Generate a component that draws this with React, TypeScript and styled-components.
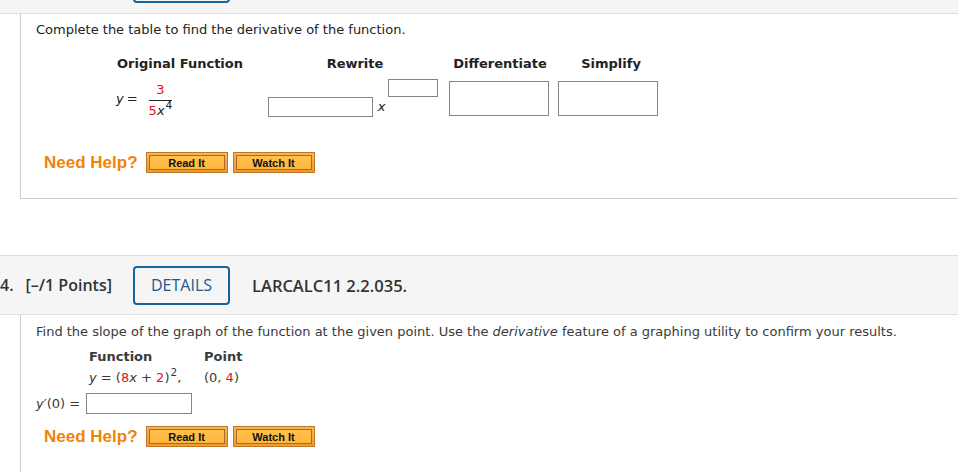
import styled, { createGlobalStyle } from "styled-components";

const GlobalStyle = createGlobalStyle`
  html, body {
    margin: 0;
    padding: 0;
    background: #fff;
  }
  body {
    font-family: "DejaVu Sans", Verdana, sans-serif;
    color: #222;
  }
`;

const Page = styled.div`
  width: 958px;
  height: 472px;
  overflow: hidden;
`;

// tail end of the previous question's header, scrolled mostly out of view
const TopStrip = styled.div`
  height: 13px;
  overflow: hidden;
  display: flex;
  align-items: flex-end;
  padding-left: 133px;
  background: #f5f5f5;
  border-bottom: 1px solid #dedede;
`;

const DetailsStub = styled.div`
  box-sizing: border-box;
  flex-shrink: 0;
  width: 97px;
  height: 39px;
  margin-bottom: 10px;
  border: 2px solid #15649a;
  border-radius: 4px;
`;

const HeaderBand = styled.div`
  display: flex;
  align-items: center;
  height: 58px;
  background: #f5f5f5;
  border-top: 1px solid #dedede;
  border-bottom: 1px solid #dedede;
  font-family: "Open Sans", sans-serif;
  color: #333;
`;

const Points = styled.span`
  font-size: 16px;
  font-weight: 600;
  width: 133px;
  white-space: nowrap;
  display: flex;
  gap: 12px;
`;

const DetailsButton = styled.div`
  box-sizing: border-box;
  width: 97px;
  height: 39px;
  border: 2px solid #15649a;
  border-radius: 4px;
  display: flex;
  align-items: center;
  justify-content: center;
  font-size: 16px;
  color: #22588a;
  margin-right: 22px;
`;

const Source = styled.span`
  font-size: 16.5px;
  font-weight: 600;
`;

const Body = styled.div<{ $height: number; $top: number }>`
  box-sizing: border-box;
  margin-left: 20px;
  height: ${(p) => p.$height}px;
  border-left: 1px solid #cccccc;
  border-bottom: 1px solid #cccccc;
  padding: ${(p) => p.$top}px 0 0 15px;
  font-size: 13px;
`;

const OpenBody = styled(Body)`
  border-bottom: none;
  color: #3a3a3a;
`;

const Gap = styled.div`
  height: 56px;
`;

const Prompt = styled.p`
  margin: 0;
  line-height: 16px;
`;

const Table = styled.div`
  display: grid;
  grid-template-columns: 140px 198px 102px 116px;
  margin: 18px 0 0 74px;
`;

const HeadCell = styled.div<{ $shift?: number }>`
  font-weight: bold;
  text-align: center;
  line-height: 16px;
  height: 22px;
  padding-left: ${(p) => (p.$shift ?? 0) * 2}px;
`;

const Cell = styled.div<{ $pad?: number }>`
  height: 40px;
  display: flex;
  align-items: center;
  justify-content: center;
  padding-left: ${(p) => p.$pad ?? 0}px;
`;

const LeftCell = styled(Cell)`
  justify-content: flex-start;
  padding-left: 6px;
`;

const Var = styled.i`
  font-style: italic;
`;

const Red = styled.span`
  color: #e0101e;
`;

const Equals = styled.span`
  margin: 0 6px 0 3px;
`;

const Fraction = styled.span`
  display: inline-flex;
  flex-direction: column;
  align-items: center;
  padding: 0 5px;
  margin-top: 4px;
`;

const Numer = styled.span`
  line-height: 15px;
  padding: 0 3px 3px;
  border-bottom: 1px solid #222;
  align-self: stretch;
  text-align: center;
`;

const Denom = styled.span`
  line-height: 15px;
  padding-top: 2px;
`;

const Sup = styled.sup`
  font-size: 10.5px;
  line-height: 0;
  vertical-align: 6px;
  margin-left: 1px;
`;

const Box = styled.span<{ $w: number; $h: number }>`
  box-sizing: border-box;
  display: inline-block;
  width: ${(p) => p.$w}px;
  height: ${(p) => p.$h}px;
  border: 1px solid #858585;
  background: #fff;
`;

const PowerGroup = styled.span`
  display: flex;
  align-items: flex-end;
`;

const XBase = styled(Var)`
  margin: 0 3px 2px 5px;
  line-height: 16px;
`;

const ExpBox = styled(Box)`
  margin-bottom: 20px;
`;

const HelpRow = styled.div<{ $top: number }>`
  display: flex;
  align-items: center;
  margin: ${(p) => p.$top}px 0 0 8px;
`;

const NeedHelp = styled.span`
  font-family: "Liberation Sans", Arial, sans-serif;
  font-weight: bold;
  font-size: 17px;
  color: #ef8406;
  margin-right: 8px;
`;

const HelpButton = styled.span`
  box-sizing: border-box;
  width: 82px;
  height: 21px;
  padding: 2px;
  margin-right: 5px;
  border: 1px solid #c07828;
  background: linear-gradient(#f9b45a, #f29a2c);
  display: flex;
`;

const HelpLabel = styled.span`
  flex: 1;
  border: 1px solid #a8692a;
  background: linear-gradient(#ffc14e, #ffb63c);
  display: flex;
  align-items: center;
  justify-content: center;
  font-family: "Liberation Sans", Arial, sans-serif;
  font-weight: bold;
  font-size: 11px;
  color: #111;
`;

const MiniTable = styled.div`
  display: grid;
  grid-template-columns: 115px auto;
  margin: 9px 0 0 53px;
  row-gap: 5px;
  line-height: 16px;
`;

const MiniHead = styled.div`
  font-weight: bold;
`;

const AnswerRow = styled.div`
  display: flex;
  align-items: center;
  margin-top: 7px;
  gap: 6px;
`;

function Help({ top }: { top: number }) {
  return (
    <HelpRow $top={top}>
      <NeedHelp>Need Help?</NeedHelp>
      <HelpButton>
        <HelpLabel>Read It</HelpLabel>
      </HelpButton>
      <HelpButton>
        <HelpLabel>Watch It</HelpLabel>
      </HelpButton>
    </HelpRow>
  );
}

export default function App() {
  return (
    <Page>
      <GlobalStyle />
      <TopStrip>
        <DetailsStub />
      </TopStrip>

      <Body $height={185} $top={8}>
        <Prompt>Complete the table to find the derivative of the function.</Prompt>
        <Table>
          <HeadCell>Original Function</HeadCell>
          <HeadCell $shift={6}>Rewrite</HeadCell>
          <HeadCell $shift={1}>Differentiate</HeadCell>
          <HeadCell $shift={3}>Simplify</HeadCell>

          <LeftCell>
            <Var>y</Var>
            <Equals> =</Equals>
            <Fraction>
              <Numer>
                <Red>3</Red>
              </Numer>
              <Denom>
                <Red>5</Red>
                <Var>x</Var>
                <Sup>4</Sup>
              </Denom>
            </Fraction>
          </LeftCell>
          <Cell $pad={8}>
            <PowerGroup>
              <Box $w={105} $h={20} />
              <XBase>x</XBase>
              <ExpBox $w={50} $h={18} />
            </PowerGroup>
          </Cell>
          <Cell>
            <Box $w={100} $h={35} />
          </Cell>
          <Cell>
            <Box $w={100} $h={35} />
          </Cell>
        </Table>
        <Help top={34} />
      </Body>

      <Gap />

      <HeaderBand>
        <Points>
          <span>4.</span>
          <span>[–/1 Points]</span>
        </Points>
        <DetailsButton>DETAILS</DetailsButton>
        <Source>LARCALC11 2.2.035.</Source>
      </HeaderBand>

      <OpenBody $height={160} $top={9}>
        <Prompt>
          Find the slope of the graph of the function at the given point. Use the <i>derivative</i> feature of a
          graphing utility to confirm your results.
        </Prompt>
        <MiniTable>
          <MiniHead>Function</MiniHead>
          <MiniHead>Point</MiniHead>
          <span>
            <Var>y</Var> = (<Red>8</Red>
            <Var>x</Var> + <Red>2</Red>)<Sup>2</Sup>,
          </span>
          <span>
            (0, <Red>4</Red>)
          </span>
        </MiniTable>
        <AnswerRow>
          <span>
            <Var>y</Var>′(0) =
          </span>
          <Box $w={106} $h={21} />
        </AnswerRow>
        <Help top={12} />
      </OpenBody>
    </Page>
  );
}
